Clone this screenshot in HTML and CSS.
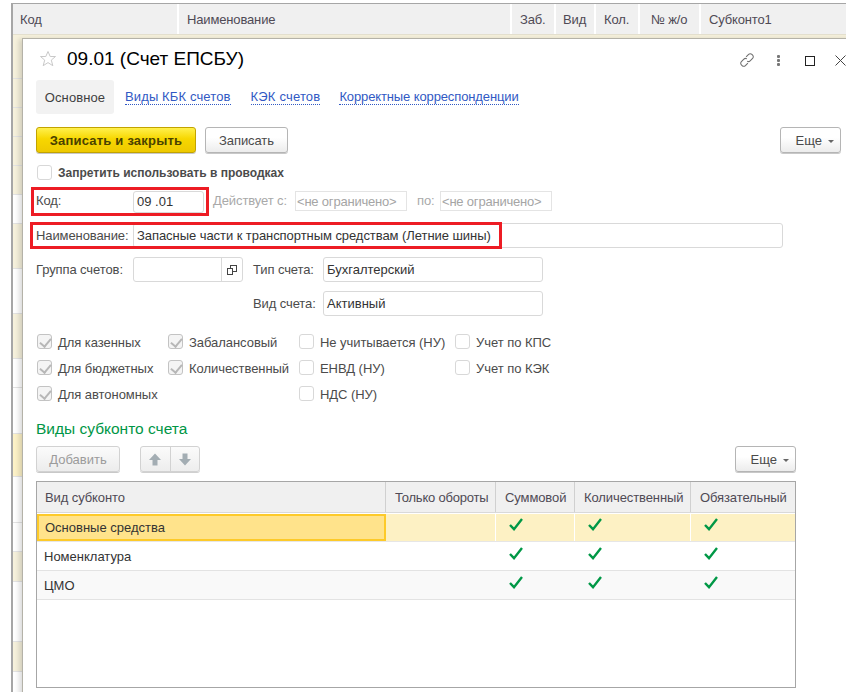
FILE: index.html
```html
<!DOCTYPE html>
<html lang="ru">
<head>
<meta charset="utf-8">
<title>09.01 (Счет ЕПСБУ)</title>
<link rel="stylesheet" href="styles.css">
</head>
<body>
<div class="desktop">
  <div class="backlist">
    <div class="back-head">
      <div class="bh w-kod">Код</div>
      <div class="bh w-name">Наименование</div>
      <div class="bh w-zab">Заб.</div>
      <div class="bh w-vid">Вид</div>
      <div class="bh w-kol">Кол.</div>
      <div class="bh w-num">№ ж/о</div>
      <div class="bh w-sub">Субконто1</div>
    </div>
    <div class="back-rows">
      <div class="br tan h44"></div>
      <div class="br tan h29"></div>
      <div class="br tan h29"></div>
      <div class="br tan h29"></div>
      <div class="br tan h29"></div>
      <div class="br h29"></div>
      <div class="br tan h45"></div>
      <div class="br h45"></div>
      <div class="br tan h45"></div>
      <div class="br h29"></div>
      <div class="br h46"></div>
      <div class="br sel h43"></div>
      <div class="br h46"></div>
      <div class="br h29"></div>
      <div class="br tan h30"></div>
      <div class="br h60"></div>
      <div class="br tan h30"></div>
      <div class="br h29"></div>
    </div>
  </div>

  <main class="window">
    <header class="title-row">
      <svg class="star" width="18" height="18" viewBox="0 0 18 18"><path d="M9 1.500l2.200 5h5.300l-4.200 3.600 1.500 5.600L9 12.600l-4.800 3.100 1.500-5.600L1.500 6.500h5.300z" fill="#fff" stroke="#c9c9c9" stroke-width="1"/></svg>
      <h1 class="title">09.01 (Счет ЕПСБУ)</h1>
      <div class="win-icons">
        <svg class="ic-link" width="16" height="16" viewBox="0 0 18 18" fill="none" stroke="#6f6f6f" stroke-width="1.200"><path d="M8 5.500l2.800-2.800a2.600 2.600 0 0 1 3.700 0l.8.800a2.600 2.600 0 0 1 0 3.700L12.500 10a2.600 2.600 0 0 1-3.300.3"/><path d="M10 12.500l-2.800 2.800a2.600 2.600 0 0 1-3.700 0l-.8-.8a2.600 2.600 0 0 1 0-3.700L5.500 8a2.600 2.600 0 0 1 3.300-.3"/></svg>
        <span class="ic-dots"><i></i><i></i><i></i></span>
        <span class="ic-max"></span>
        <svg class="ic-close" width="11" height="11" viewBox="0 0 11 11" stroke="#444" stroke-width="1" fill="none"><path d="M.5.5l10 10M10.500.5l-10 10"/></svg>
      </div>
    </header>

    <nav class="tabs">
      <span class="tab-active">Основное</span>
      <a class="tab-link t1">Виды КБК счетов</a>
      <a class="tab-link t2">КЭК счетов</a>
      <a class="tab-link t3">Корректные корреспонденции</a>
    </nav>

    <div class="toolbar">
      <button class="btn btn-primary">Записать и закрыть</button>
      <button class="btn btn-save">Записать</button>
      <button class="btn btn-more">Еще<span class="caret"></span></button>
    </div>

    <label class="check-line bold"><span class="cb"></span>Запретить использовать в проводках</label>

    <div class="field-row row-kod">
      <span class="lbl l-kod">Код:</span>
      <span class="input i-kod">09 .01</span>
      <span class="lbl dis l-from">Действует с:</span>
      <span class="input disabled i-date">&lt;не ограничено&gt;</span>
      <span class="lbl dis l-to">по:</span>
      <span class="input disabled i-date">&lt;не ограничено&gt;</span>
    </div>

    <div class="field-row row-name">
      <span class="lbl l-name">Наименование:</span>
      <span class="input i-name">Запасные части к транспортным средствам (Летние шины)</span>
    </div>

    <div class="field-row row-group">
      <span class="lbl l-group">Группа счетов:</span>
      <span class="input i-group"><span class="open-btn"><svg width="10" height="10" viewBox="0 0 10 10" fill="none" stroke="#444"><rect x="3.500" y=".5" width="6" height="6" fill="#fff"/><rect x=".5" y="3.500" width="5" height="6" fill="#fff"/></svg></span></span>
      <span class="lbl l-type">Тип счета:</span>
      <span class="input i-type">Бухгалтерский</span>
    </div>

    <div class="field-row row-kind">
      <span class="lbl l-kind">Вид счета:</span>
      <span class="input i-type">Активный</span>
    </div>

    <div class="checks">
      <div class="ch-col c1">
        <label class="check-line"><span class="cb on"></span>Для казенных</label>
        <label class="check-line"><span class="cb on"></span>Для бюджетных</label>
        <label class="check-line"><span class="cb on"></span>Для автономных</label>
      </div>
      <div class="ch-col c2">
        <label class="check-line"><span class="cb on"></span>Забалансовый</label>
        <label class="check-line"><span class="cb on"></span>Количественный</label>
      </div>
      <div class="ch-col c3">
        <label class="check-line"><span class="cb"></span>Не учитывается (НУ)</label>
        <label class="check-line"><span class="cb"></span>ЕНВД (НУ)</label>
        <label class="check-line"><span class="cb"></span>НДС (НУ)</label>
      </div>
      <div class="ch-col c4">
        <label class="check-line"><span class="cb"></span>Учет по КПС</label>
        <label class="check-line"><span class="cb"></span>Учет по КЭК</label>
      </div>
    </div>

    <h2 class="section">Виды субконто счета</h2>

    <div class="table-bar">
      <button class="btn btn-add">Добавить</button>
      <div class="updown">
        <span class="ud"><svg width="12" height="13" viewBox="0 0 12 13"><path d="M6 .5L12 7H8.500v5.500h-5V7H0z" fill="#a3adb3"/></svg></span>
        <span class="ud"><svg width="12" height="13" viewBox="0 0 12 13"><path d="M6 12.500L12 6H8.500V.5h-5V6H0z" fill="#a3adb3"/></svg></span>
      </div>
      <button class="btn btn-more2">Еще<span class="caret"></span></button>
    </div>

    <div class="grid">
      <div class="g-row g-head">
        <div class="gc c-a">Вид субконто</div>
        <div class="gc c-b">Только обороты</div>
        <div class="gc c-c">Суммовой</div>
        <div class="gc c-d">Количественный</div>
        <div class="gc c-e">Обязательный</div>
      </div>
      <div class="g-row g-sel">
        <div class="gc c-a cur">Основные средства</div>
        <div class="gc c-b"></div>
        <div class="gc c-c"><svg class="tick" viewBox="0 0 14 13"><path d="M1 7l4 4.200L13 1"/></svg></div>
        <div class="gc c-d"><svg class="tick" viewBox="0 0 14 13"><path d="M1 7l4 4.200L13 1"/></svg></div>
        <div class="gc c-e"><svg class="tick" viewBox="0 0 14 13"><path d="M1 7l4 4.200L13 1"/></svg></div>
      </div>
      <div class="g-row g-body">
        <div class="gc c-a">Номенклатура</div>
        <div class="gc c-b"></div>
        <div class="gc c-c"><svg class="tick" viewBox="0 0 14 13"><path d="M1 7l4 4.200L13 1"/></svg></div>
        <div class="gc c-d"><svg class="tick" viewBox="0 0 14 13"><path d="M1 7l4 4.200L13 1"/></svg></div>
        <div class="gc c-e"><svg class="tick" viewBox="0 0 14 13"><path d="M1 7l4 4.200L13 1"/></svg></div>
      </div>
      <div class="g-row g-body alt">
        <div class="gc c-a">ЦМО</div>
        <div class="gc c-b"></div>
        <div class="gc c-c"><svg class="tick" viewBox="0 0 14 13"><path d="M1 7l4 4.200L13 1"/></svg></div>
        <div class="gc c-d"><svg class="tick" viewBox="0 0 14 13"><path d="M1 7l4 4.200L13 1"/></svg></div>
        <div class="gc c-e"><svg class="tick" viewBox="0 0 14 13"><path d="M1 7l4 4.200L13 1"/></svg></div>
      </div>
    </div>

    <div class="mark mark-kod"></div>
    <div class="mark mark-name"></div>
  </main>
</div>
</body>
</html>
```

FILE: styles.css
```css
* { box-sizing: border-box; }
html, body { margin: 0; padding: 0; }
body {
  width: 846px;
  height: 692px;
  overflow: hidden;
  background: #fff;
  font-family: "Liberation Sans", Arial, sans-serif;
  font-size: 13px;
  color: #4b4b4b;
}
.desktop { position: relative; width: 846px; height: 692px; overflow: hidden; }

/* background list */
.backlist {
  position: absolute; left: 11px; top: 3px; right: -10px; bottom: -20px;
  border: solid #a6a6a6;
  border-width: 1px 0 0 2px;
  background: #fff;
}
.back-head { display: flex; height: 31px; background: #fff; border-bottom: 1px solid #e4e0cf; }
.bh {
  background: #f0f0f0;
  border-right: 2px solid #fff;
  display: flex; align-items: center;
  padding-left: 8px;
  color: #4f4a55;
  height: 30px;
  flex: none;
  letter-spacing: -.15px;
}
.w-kod { width: 166px; padding-left: 7px; }
.w-name { width: 333px; }
.w-zab { width: 44px; }
.w-vid { width: 40px; padding-left: 7px; }
.w-kol { width: 44px; }
.w-num { width: 61px; padding-left: 11px; }
.w-sub { width: 160px; }
.back-rows { display: flex; flex-direction: column; }
.br { border-bottom: 1px solid #e3e3e3; background: #fff; flex: none; }
.tan { background: #f6f1dc; }
.sel { background: #fdf2c7; }
.h29 { height: 29px; }
.h30 { height: 30px; }
.h43 { height: 43px; }
.h44 { height: 44px; }
.h45 { height: 45px; }
.h46 { height: 46px; }
.h60 { height: 60px; }

/* modal window */
.window {
  position: absolute; left: 23px; top: 39px; width: 840px; height: 670px;
  background: #fff;
  box-shadow: -1px -1px 0 #b4b2a8, -4px 0 5px rgba(0,0,0,.14);
  padding: 0 0 0 13px;
}
.title-row { display: flex; align-items: center; height: 40px; padding-right: 30px; }
.star { margin: 0 0 0 3px; flex: none; }
.title { margin: 0 0 0 10px; font-size: 19px; font-weight: 400; color: #000; line-height: 22px; }
.win-icons { position: absolute; left: 714px; top: 11px; width: 110px; height: 20px; }
.ic-link { position: absolute; left: 2px; top: 2px; }
.ic-dots { position: absolute; left: 40px; top: 5px; display: flex; flex-direction: column; gap: 1px; }
.ic-dots i { display: block; width: 3px; height: 3px; background: #777; border-radius: 1px; }
.ic-max { position: absolute; left: 68px; top: 6px; width: 10px; height: 10px; border: 1px solid #222; }
.ic-close { position: absolute; left: 98px; top: 5px; }

.tabs { display: flex; align-items: center; height: 34px; margin-top: 1px; }
.tab-active {
  width: 78px; height: 34px; background: #f2f2f2; border-radius: 3px;
  display: flex; align-items: center; justify-content: center;
  color: #3f3f3f; letter-spacing: .1px;
}
.tab-link { color: #3159c4; border-bottom: 1px dotted #3159c4; line-height: 14px; white-space: nowrap; }
.t1 { margin-left: 11px; letter-spacing: .13px; }
.t2 { margin-left: 20px; letter-spacing: .18px; }
.t3 { margin-left: 19px; letter-spacing: -.12px; }

.toolbar { display: flex; align-items: flex-start; height: 27px; margin-top: 13px; }
.btn {
  font-family: inherit; font-size: 13px; color: #4a4a4a;
  height: 26px; padding: 0;
  border: 1px solid #b5b5b5; border-radius: 3px;
  background: linear-gradient(#fff 40%, #ececec);
  box-shadow: 0 1px 0 #c8c8c8;
  flex: none;
}
.btn-primary {
  width: 160px; font-weight: 700; color: #4a4200; letter-spacing: .2px;
  background: linear-gradient(#fff04d, #f7d700 45%, #eec900);
  border-color: #c2a300;
}
.btn-save { width: 83px; margin-left: 9px; letter-spacing: -.1px; }
.btn-more { width: 61px; margin-left: 492px; text-align: right; padding-right: 6px; }
.btn-more2 { width: 61px; margin-left: auto; text-align: right; padding-right: 6px; }
.caret {
  display: inline-block; margin-left: 6px; vertical-align: 2px;
  border: 3px solid transparent; border-top-color: #666; border-bottom: 0;
}

.check-line { display: flex; align-items: center; height: 26px; white-space: nowrap; color: #4b4b4b; letter-spacing: -.05px; }
.check-line.bold { font-weight: 700; font-size: 12px; height: 15px; margin-top: 11px; margin-left: 1px; letter-spacing: 0; }
.cb {
  flex: none; width: 15px; height: 15px; margin-right: 6px;
  border: 1px solid #d8d8d8; border-radius: 3px; background: #fff;
  position: relative;
}
.checks .cb { margin-top: -1px; }
.cb.on { border-color: #c3c3c3; background: #f4f4f4; }
.cb.on::after {
  content: ""; position: absolute; left: 4px; top: 1px;
  width: 5px; height: 9px;
  border: solid #b7b7b7; border-width: 0 2px 2px 0;
  transform: rotate(40deg);
}

.field-row { display: flex; align-items: center; }
.lbl { white-space: nowrap; flex: none; letter-spacing: -.1px; }
.dis { color: #a9a9a9; }
.input {
  display: flex; align-items: center; flex: none;
  height: 25px; padding-left: 3px;
  border: 1px solid #d9d9d9; border-radius: 3px; background: #fff;
  color: #333; white-space: nowrap;
}
.row-kod { height: 22px; margin-top: 11px; align-items: flex-start; }
.row-kod .lbl { line-height: 20px; }
.l-kod { width: 97px; }
.i-kod { width: 71px; height: 22px; padding-bottom: 2px; }
.l-from { margin-left: 9px; width: 82px; }
.input.disabled {
  border: 1px solid #e4e4e4; border-radius: 0; color: #a5a5a5;
  height: 20px; padding-left: 1px; width: 112px; letter-spacing: -.2px;
}
.l-to { margin-left: 10px; width: 23px; }

.row-name { height: 25px; margin-top: 10px; }
.l-name { width: 97px; }
.i-name { width: 650px; letter-spacing: -.06px; }

.row-group { height: 25px; margin-top: 9px; }
.l-group { width: 97px; }
.i-group { width: 110px; padding: 0; justify-content: flex-end; }
.open-btn { width: 21px; height: 23px; border-left: 1px solid #d9d9d9; display: flex; align-items: center; justify-content: center; }
.l-type { margin-left: 10px; width: 70px; }
.i-type { width: 220px; }

.row-kind { height: 25px; margin-top: 9px; padding-left: 217px; }
.l-kind { width: 70px; }

.checks { display: flex; margin-top: 13px; }
.ch-col { display: flex; flex-direction: column; flex: none; }
.c1 { width: 131px; }
.c2 { width: 131px; }
.c3 { width: 156px; }
.ch-col .check-line { margin-left: 1px; }

.section { margin: 13px 0 0; font-size: 15.500px; font-weight: 400; color: #009646; line-height: 17px; }

.table-bar { display: flex; width: 760px; height: 27px; margin-top: 9px; align-items: flex-start; }
.btn-add { width: 84px; color: #9b9b9b; background: linear-gradient(#fbfbfb, #ececec); border-color: #d2d2d2; }
.updown { display: flex; margin-left: 20px; height: 26px; width: 60px; border: 1px solid #d2d2d2; border-radius: 3px; background: linear-gradient(#fbfbfb, #ededed); box-shadow: 0 1px 0 #d0d0d0; }
.ud { flex: 1; display: flex; align-items: center; justify-content: center; }
.ud + .ud { border-left: 1px solid #d2d2d2; }

.grid {
  width: 760px; height: 207px; margin-top: 8px;
  border: 1px solid #a6a6a6;
  background: #fff;
}
.g-row { display: flex; }
.gc { display: flex; align-items: center; padding-left: 7px; white-space: nowrap; color: #333; flex: none; }
.c-a { width: 349px; }
.c-b { width: 110px; }
.c-c { width: 79px; padding-left: 13px; }
.c-d { width: 116px; padding-left: 13px; }
.c-e { width: 104px; padding-left: 13px; }
.g-head { height: 31px; border-bottom: 1px solid #d9d9d9; }
.g-head .gc { background: #f0f0f0; color: #4f4a55; border-right: 1px solid #d0d0d0; height: 30px; letter-spacing: -.1px; padding-left: 8px; }
.g-head .c-b { padding-left: 9px; letter-spacing: -.2px; }
.g-head .c-c, .g-head .c-d, .g-head .c-e { padding-left: 9px; }
.g-sel { height: 28px; border-bottom: 1px solid #e6e6e6; margin-top: 1px; }
.g-sel .gc { background: #fdf1c4; border-right: 1px solid #fff; height: 27px; }
.g-sel .cur { background: #ffe38b; border: 2px solid #fdca29; padding-left: 6px; }
.g-body { height: 29px; border-bottom: 1px solid #e3e3e3; }
.g-body.alt { background: #f9f9f9; }
.g-row .c-e { border-right: 0; }
.tick { width: 14px; height: 13px; margin-top: -6px; fill: none; stroke: #009846; stroke-width: 2.400; }

/* red annotation frames */
.mark { position: absolute; border: 3px solid #ed1c24; pointer-events: none; }
.mark-kod { left: 8px; top: 148px; width: 178px; height: 29px; }
.mark-name { left: 7px; top: 183px; width: 472px; height: 27px; }
```
